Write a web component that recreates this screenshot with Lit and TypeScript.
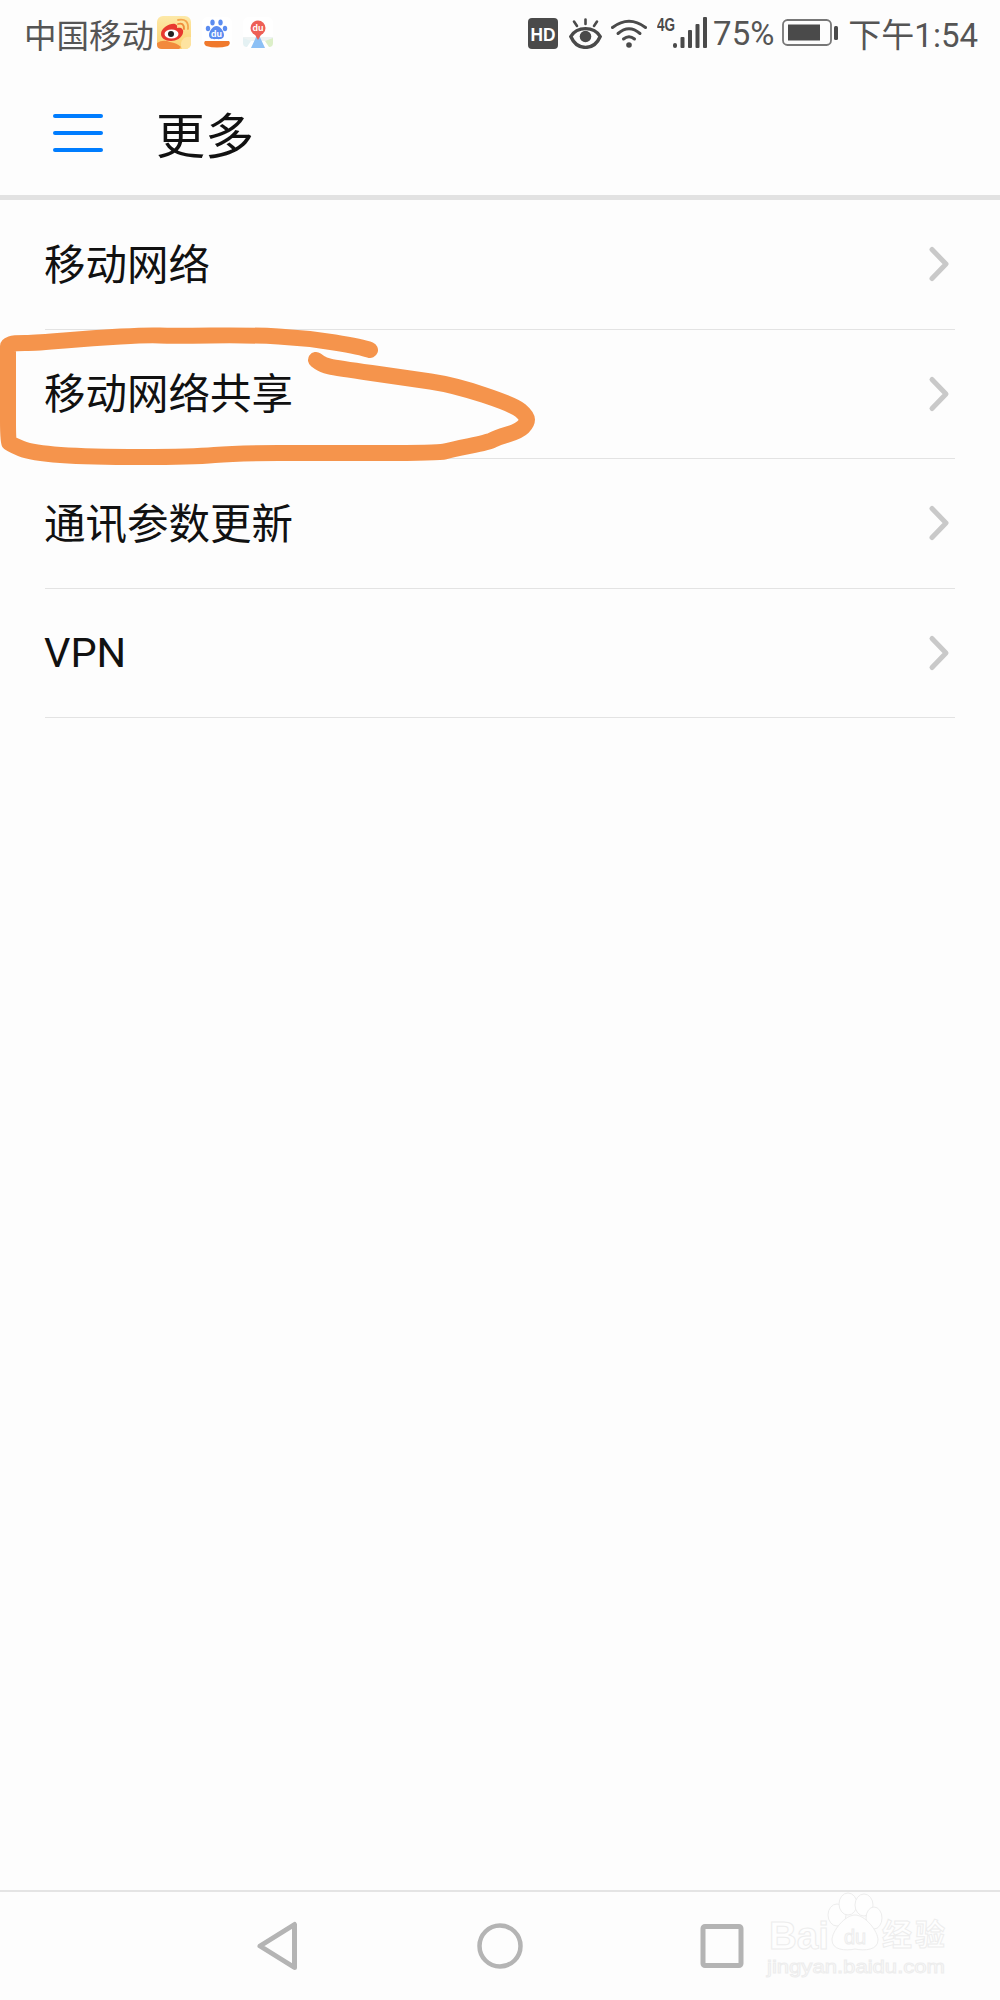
import { LitElement, html, css, svg } from "lit";
import { customElement } from "lit/decorators.js";

const ROWS = ["移动网络", "移动网络共享", "通讯参数更新", "VPN"];

const weibo = svg`<svg class="app" width="34" height="34" viewBox="0 0 34 34">
  <defs><linearGradient id="wb" x1="0" y1="0" x2="0" y2="1"><stop offset="0" stop-color="#fde9a8"/><stop offset="1" stop-color="#fbd06f"/></linearGradient></defs>
  <rect width="34" height="33" rx="6" fill="url(#wb)"/>
  <path d="M0 27 Q6 23 13 26 Q20 27 24 31 L22 33 L5 33 Q0 33 0 29Z" fill="#f28a3c"/>
  <path d="M27 22 Q31 20 34 21 V27 Q34 33 28 33 L25 33 Q22 27 27 22Z" fill="#fde3a0"/>
  <path d="M4 18 C4 12 13 7 18 8 C21 9 20 11 20 12 C24 11 27 13 26 17 C25 22 19 25 14 25 C8 25 4 22 4 18Z" fill="#e8392f"/>
  <ellipse cx="14.500" cy="18" rx="7" ry="4.600" fill="#fff"/>
  <circle cx="14" cy="18" r="3" fill="#222"/>
  <path d="M21 8 Q27 6 27 13" fill="none" stroke="#ef8a3a" stroke-width="1.800" stroke-linecap="round"/>
  <path d="M21 4 Q32 2 31 13" fill="none" stroke="#f4a64e" stroke-width="1.800" stroke-linecap="round"/>
</svg>`;

const baiduApp = svg`<svg class="app" width="30" height="32" viewBox="0 0 30 32">
  <rect width="30" height="31" rx="6" fill="#fff"/>
  <g fill="#5b8cf0">
    <ellipse cx="10.500" cy="5.500" rx="2.200" ry="3"/>
    <ellipse cx="18.500" cy="5.500" rx="2.200" ry="3"/>
    <ellipse cx="6" cy="11.500" rx="2.200" ry="2.800"/>
    <ellipse cx="23" cy="11.500" rx="2.200" ry="2.800"/>
    <path d="M14.500 9 C18 9 22 14 22 18 C22 22 18 22.500 14.500 22 C11 22.500 7 22 7 18 C7 14 11 9 14.500 9Z"/>
  </g>
  <text class="du" x="14.500" y="20" font-size="9" text-anchor="middle" fill="#fff">du</text>
  <path d="M3 24 H27 Q29 26.500 26 29 Q15 32 4 29 Q1 26.500 3 24Z" fill="#f0792c"/>
</svg>`;

const mapApp = svg`<svg class="app" width="30" height="32" viewBox="0 0 30 32">
  <rect width="30" height="31" rx="6" fill="#fff"/>
  <path d="M0 20 H30 V24 H0Z" fill="#eef3f3"/>
  <path d="M22 24 L30 21 V26 Q30 30 26 30Z" fill="#dcefc8"/>
  <path d="M8 24 L0 21 V26 Q0 30 4 30Z" fill="#e4f1f3"/>
  <path d="M15 16 L22 31 H8Z" fill="#8cc0f5"/>
  <circle cx="15" cy="11" r="7.500" fill="#ee5f56"/>
  <path d="M11 16 L15 23 L19 16Z" fill="#ee5f56"/>
  <text class="du" x="15" y="14" font-size="8.500" text-anchor="middle" fill="#fff">du</text>
</svg>`;

const hd = svg`<svg width="30" height="31" viewBox="0 0 30 31">
  <rect width="30" height="31" rx="4" fill="#4a4a4a"/>
  <text class="sysb" x="15" y="22.500" font-size="19" text-anchor="middle" fill="#fff" textLength="25" lengthAdjust="spacingAndGlyphs">HD</text>
</svg>`;

const eye = svg`<svg width="33" height="31" viewBox="0 0 33 31" fill="none" stroke="#4a4a4a" stroke-linecap="round">
  <path d="M1.800 18.500 C8 8 25 8 31.200 18.500 C25 33 8 33 1.800 18.500Z" stroke-width="3.400"/>
  <circle cx="16.500" cy="18.500" r="5.800" fill="#4a4a4a" stroke="none"/>
  <path d="M16.500 1.500 V6 M5 3.500 L8 8 M28 3.500 L25 8" stroke-width="2.600"/>
</svg>`;

const wifi = svg`<svg width="36" height="30" viewBox="0 0 36 30" fill="none" stroke="#4a4a4a" stroke-width="3" stroke-linecap="round">
  <path d="M1.500 9.500 Q18 -3 34.500 9.500"/>
  <path d="M7 15.500 Q18 6 29 15.500"/>
  <path d="M12.500 21 Q18 16.500 23.500 21"/>
  <circle cx="18" cy="27" r="2.800" fill="#4a4a4a" stroke="none"/>
</svg>`;

const signal = svg`<svg class="sig" width="50" height="36" viewBox="0 -4 50 36">
  <text class="sysb" x="0" y="14" font-size="18" fill="#4a4a4a" textLength="18" lengthAdjust="spacingAndGlyphs">4G</text>
  <g fill="#4a4a4a">
    <rect x="16" y="26" width="4" height="5" rx="2"/>
    <rect x="23.500" y="20" width="4" height="11" rx="1"/>
    <rect x="31" y="13" width="4" height="18" rx="1"/>
    <rect x="38.500" y="7" width="4" height="24" rx="1"/>
    <rect x="46" y="0" width="4" height="31" rx="1"/>
  </g>
</svg>`;

const battery = svg`<svg width="56" height="28" viewBox="0 0 56 28">
  <rect x="1" y="1" width="48" height="25" rx="4.500" fill="none" stroke="#777" stroke-width="1.800"/>
  <rect x="6" y="5.500" width="32" height="16" fill="#4a4a4a"/>
  <rect x="52" y="7" width="4" height="14" rx="1.500" fill="#4a4a4a"/>
</svg>`;

const chevron = svg`<svg class="chev" width="24" height="40" viewBox="0 0 24 40" fill="none" stroke="#c9c9c9" stroke-width="5" stroke-linecap="round" stroke-linejoin="round">
  <path d="M6 5.500 L20 20 L6 34.500"/>
</svg>`;

const back = svg`<svg width="48" height="52" viewBox="0 0 48 52" fill="none" stroke="#b4b4b4" stroke-width="5" stroke-linejoin="round">
  <path d="M6 26 L40.500 4.500 V47.500 Z"/>
</svg>`;

const home = svg`<svg width="48" height="52" viewBox="0 0 48 52" fill="none" stroke="#b4b4b4" stroke-width="4.500">
  <circle cx="24" cy="26" r="20.500"/>
</svg>`;

const recent = svg`<svg width="48" height="52" viewBox="0 0 48 52" fill="none" stroke="#b4b4b4" stroke-width="5" stroke-linejoin="round">
  <rect x="5" y="6.500" width="38" height="39" rx="2"/>
</svg>`;

const POINTS: [number, number][] = [
  [370, 350], [362, 347], [307, 338], [250, 335], [171, 336], [148, 335], [93, 338], [36, 343],
  [14, 343], [8, 345], [8, 347], [8, 400], [8, 441], [10, 444], [32, 453], [89, 457], [193, 457],
  [236, 453], [321, 453], [439, 453], [450, 450], [489, 442], [496, 438], [519, 431], [527, 423],
  [527, 416], [514, 405], [454, 385], [407, 378], [336, 368], [323, 365], [316, 360],
];

function smooth(pts: [number, number][]) {
  let d = `M${pts[0][0]} ${pts[0][1]}`;
  for (let i = 1; i < pts.length - 1; i++) {
    const [x, y] = pts[i];
    const [nx, ny] = pts[i + 1];
    d += ` Q${x} ${y} ${(x + nx) / 2} ${(y + ny) / 2}`;
  }
  const last = pts[pts.length - 1];
  return d + ` L${last[0]} ${last[1]}`;
}

@customElement("app-root")
export class AppRoot extends LitElement {
  static styles = css`
    :host {
      display: block;
      position: relative;
      width: 1000px;
      height: 2000px;
      overflow: hidden;
      background: #fdfdfd;
      font-family: "Noto Sans CJK SC", "Noto Sans", sans-serif;
    }
    .page {
      display: flex;
      flex-direction: column;
      height: 100%;
    }
    .status {
      display: flex;
      align-items: center;
      height: 70px;
      box-sizing: border-box;
      padding: 0 22px 4px 24px;
      color: #555;
      font-size: 33px;
      flex: none;
    }
    .carrier {
      margin-right: 3px;
      font-size: 32.500px;
    }
    .apps {
      display: flex;
      align-items: center;
      gap: 11px;
    }
    .sys {
      margin-left: auto;
      display: flex;
      align-items: center;
    }
    .sys svg {
      display: block;
      flex: none;
    }
    .sys .sig {
      margin-top: -4px;
    }
    .gap-11 { margin-left: 11px; }
    .gap-10 { margin-left: 10px; }
    .gap-9 { margin-left: 9px; }
    .gap-8 { margin-left: 8px; }
    .gap-6 { margin-left: 6px; }
    .num {
      font-family: Roboto, "Noto Sans CJK SC", sans-serif;
    }
    .du { font: 700 9px "Liberation Sans", sans-serif; }
    .sysb { font-family: "Liberation Sans", sans-serif; font-weight: 700; }
    header {
      display: flex;
      align-items: center;
      height: 125px;
      padding-left: 53px;
      gap: 53px;
      flex: none;
      border-bottom: 5px solid #e2e2e2;
    }
    .menu {
      display: flex;
      flex-direction: column;
      gap: 13px;
      width: 50px;
    }
    .menu span {
      height: 4px;
      border-radius: 2px;
      background: #007dff;
    }
    h1 {
      margin: 0;
      font-size: 49px;
      font-weight: 400;
      color: #111;
      line-height: 1;
    }
    .list {
      display: flex;
      flex-direction: column;
      padding: 0 45px;
    }
    .row {
      display: flex;
      align-items: center;
      justify-content: space-between;
      height: 129.500px;
      box-sizing: border-box;
      border-bottom: 1.500px solid #e3e3e3;
      font-size: 41.500px;
      color: #111;
    }
    .label {
      margin-left: -1px;
    }
    .label.cjk {
      padding-bottom: 5px;
    }
    .chev {
      margin-right: 5px;
    }
    .spacer {
      flex: 1;
    }
    nav {
      flex: none;
      height: 110px;
      box-sizing: border-box;
      border-top: 2px solid #e4e4e4;
      display: flex;
      align-items: center;
      justify-content: center;
      gap: 174px;
    }
    .scribble {
      position: absolute;
      inset: 0;
      pointer-events: none;
    }
    .mark {
      position: absolute;
      left: 760px;
      top: 1885px;
      pointer-events: none;
    }
    .mark text {
      font-family: "Liberation Sans", sans-serif;
      fill: #fefefe;
      stroke: #ededed;
      stroke-width: 1;
    }
    .mark .cjk {
      font-family: "Noto Sans CJK SC", sans-serif;
      font-weight: 700;
    }
  `;

  render() {
    return html`
      <div class="page">
        <div class="status">
          <span class="carrier">中国移动</span>
          <div class="apps">${weibo}${baiduApp}${mapApp}</div>
          <div class="sys">
            ${hd}
            <span class="gap-11">${eye}</span>
            <span class="gap-9">${wifi}</span>
            <span class="gap-10">${signal}</span>
            <span class="gap-6 num">75%</span>
            <span class="gap-8">${battery}</span>
            <span class="gap-10 num">下午1:54</span>
          </div>
        </div>
        <header>
          <div class="menu"><span></span><span></span><span></span></div>
          <h1>更多</h1>
        </header>
        <div class="list">
          ${ROWS.map(
            (r) =>
              html`<div class="row ${r === "VPN" ? "num" : ""}">
                <span class="label ${r === "VPN" ? "" : "cjk"}">${r}</span>${chevron}
              </div>`
          )}
        </div>
        <div class="spacer"></div>
        <nav>${back}${home}${recent}</nav>
      </div>
      <svg class="scribble" width="1000" height="2000" viewBox="0 0 1000 2000" fill="none">
        <path d="${smooth(POINTS)}" stroke="#f5944c" stroke-width="16" stroke-linecap="round" stroke-linejoin="round"/>
      </svg>
      <svg class="mark" width="200" height="100" viewBox="0 0 200 100">
        <text x="9" y="63.500" font-size="38" font-weight="700" textLength="60" lengthAdjust="spacingAndGlyphs">Bai</text>
        <g fill="#fefefe" stroke="#ededed" stroke-width="1">
          <ellipse cx="77" cy="30" rx="9" ry="11"/>
          <ellipse cx="88" cy="19" rx="9" ry="11"/>
          <ellipse cx="104" cy="20" rx="9" ry="11"/>
          <ellipse cx="114" cy="33" rx="8" ry="11"/>
          <path d="M95 30 C105 30 118 46 118 55 C118 65 105 66 95 64 C85 66 72 65 72 55 C72 46 85 30 95 30Z"/>
        </g>
        <text x="95" y="59" font-size="20" text-anchor="middle">du</text>
        <text class="cjk" x="122" y="60" font-size="30" textLength="63">经验</text>
        <text x="7" y="88" font-size="18" textLength="178" lengthAdjust="spacingAndGlyphs">jingyan.baidu.com</text>
      </svg>
    `;
  }
}
